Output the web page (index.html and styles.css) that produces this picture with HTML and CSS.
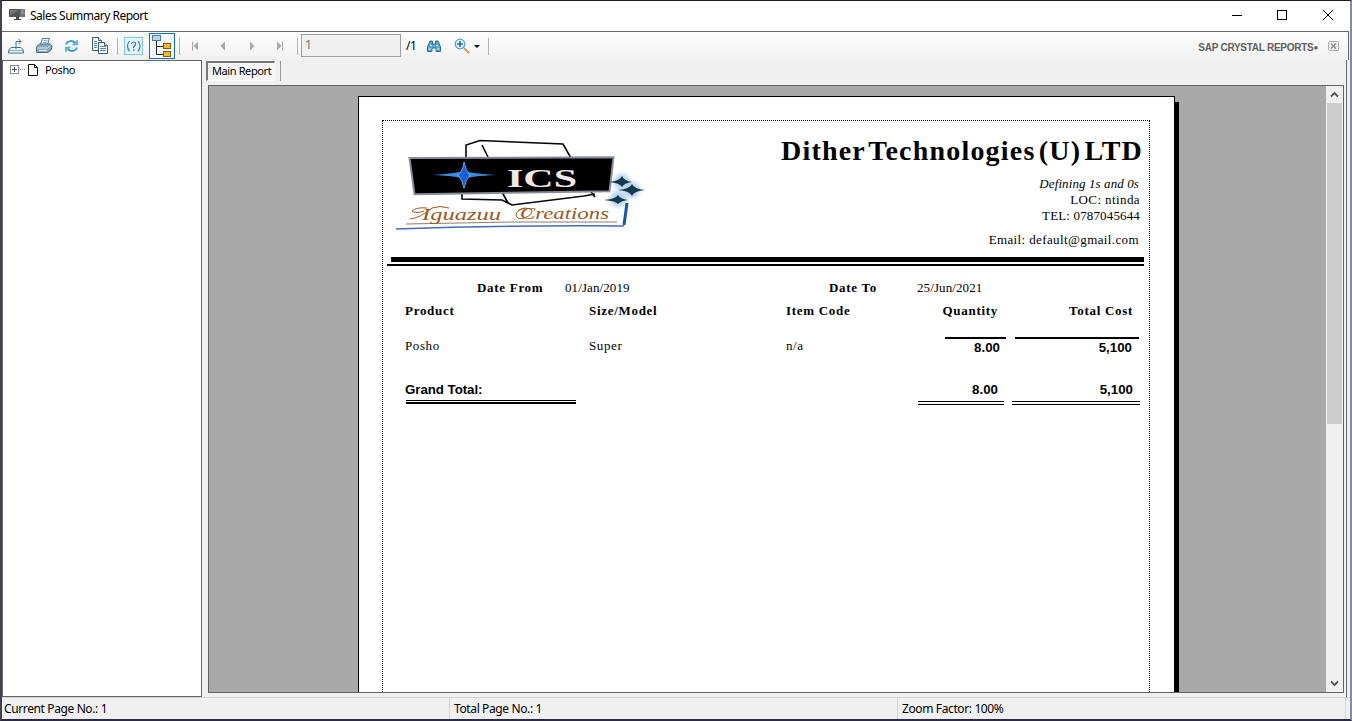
FILE: index.html
```html
<!DOCTYPE html>
<html lang="en">
<head>
<meta charset="utf-8">
<title>Sales Summary Report</title>
<link rel="stylesheet" href="styles.css">
</head>
<body>
<div class="window">
  <header class="titlebar">
    <svg class="app-icon" width="17" height="14" viewBox="0 0 17 14"><rect x="0" y="1" width="11" height="8" fill="#555"/><path d="M1 2h9L1 7z" fill="#777"/><rect x="11" y="1" width="5" height="8" fill="#777"/><path d="M12 3h3M12 5h3" stroke="#aaa"/><path d="M7 9h3v2h2v1H5v-1h2z" fill="#444"/></svg>
    <span class="caption">Sales Summary Report</span>
    <svg class="win-buttons" width="110" height="14" viewBox="0 0 110 14" fill="none" stroke="#000"><path d="M2 7.500h10"/><rect x="47.500" y="2.500" width="9" height="9"/><path d="M93 2l10 10M103 2L93 12"/></svg>
  </header>
  <nav class="toolbar">
    <svg width="300" height="28" viewBox="0 0 300 28" fill="none">
      <g stroke="#397598"><path d="M11 15.500L8.500 18.500v2.500h15v-2.500l-2.500-3z" fill="#eef7fb"/><path d="M9 18.500h14" stroke="#7fb3cf"/><path d="M16 17V9.500h5M18.500 7l2.500 2.500-2.500 2.500"/></g>
      <g stroke="#48748f"><path d="M40.500 12.500l2-6h7l-2 6" fill="#f4fafd"/><path d="M36.500 14.500l3-2.500h11l1.500 2-1 4-3 2.500h-11.500z" fill="#8aa6b8"/><path d="M37.500 16h10l3-2.500M39 18.500h8" stroke="#e4eef3"/><path d="M43.500 8.500h4M43 10.500h4" stroke="#7bb9d9"/></g>
      <g stroke="#3f9fca" stroke-width="2"><path d="M66 12.500c1.500-4 6.500-4.500 9-1.500M77 15.500c-1.500 4-6.500 4.500-9 1.500"/><path d="M77.500 8v5h-5zM65.500 20v-5h5z" fill="#62b9df" stroke-width=".6"/></g>
      <g stroke="#365b78" fill="#fff"><path d="M92.500 5.500h6l3 3v10h-9z"/><path d="M98.500 10.500h6l3 3v8h-9z"/><path d="M94 9.500h3M94 11.500h3M94 13.500h3M94 15.500h3M100 14.500h6M100 16.500h6M100 18.500h6" stroke="#5484a2"/><path d="M98.500 5.500v3h3M104.500 10.500v3h3"/></g>
      <path d="M117.500 6v17M179.500 6v17" stroke="#b5b5b5"/>
      <rect x="124.500" y="5.500" width="18" height="17" fill="#e5f4fc" stroke="#81c7eb"/>
      <path d="M129.500 9q-4 5 0 10.500M138 9q4 5 0 10.500M131.500 12q.3-2 2.200-2 2 0 2 2 0 1-2 2.500v1.500" stroke="#2880b9" stroke-width="1.200"/><path d="M133 17.200h1.500v1.500H133z" fill="#2880b9"/>
      <rect x="149.500" y="1.500" width="25" height="25" fill="#f3f9fd" stroke="#176eb5"/>
      <path d="M156.500 9v13.500h7M157 14.500h7" stroke="#222"/><rect x="152.500" y="3.500" width="8" height="5" fill="#b8d9f5" stroke="#4778a8"/><rect x="163.500" y="11.500" width="7" height="5" fill="#f6b72f" stroke="#805a18"/><rect x="163.500" y="19.500" width="7" height="5" fill="#f6b72f" stroke="#805a18"/>
      <g fill="#a9a9a9"><path d="M192 9.500h1v9h-1zM198 9.500v9L193.500 14zM225 9.500v9L220.500 14zM250 9.500v9l4.500-4.500zM277 9.500v9l4.500-4.500zM282 9.500h1v9h-1z"/></g>
      <path d="M297.500 6v17" stroke="#b5b5b5"/>
    </svg>
    <div class="page-input">1</div>
    <span class="page-total">/1</span>
    <svg class="tools" width="72" height="28" viewBox="0 0 72 28" fill="none">
      <path d="M4.500 19.500V15l2.500-6h2.500v3h3V9H15l2.500 6v4.500h-4.500V16H9v3.500z" fill="#5aa9cc" stroke="#286e95"/><path d="M7 13.500h2M13 13.500h2M5.500 17h3M13.500 17h3" stroke="#c5eafa"/>
      <path d="M41 16l5 5" stroke="#d69a59" stroke-width="2"/><circle cx="37" cy="12" r="4.800" fill="#e4f3fc" stroke="#5d9fd4" stroke-width="1.300"/><path d="M34 12h6M37 9v6" stroke="#176dc1" stroke-width="1.600"/>
      <path d="M51 13h6l-3 3z" fill="#000"/><path d="M65.500 6v17" stroke="#b5b5b5"/>
    </svg>
    <span class="brand">SAP CRYSTAL REPORTS<sup>●</sup></span>
    <svg class="close-view" width="12" height="12" viewBox="0 0 12 12"><rect x=".5" y=".5" width="10" height="9" rx="1" fill="#eee" stroke="#b0b0b0"/><path d="M3 2.500l5 5M8 2.500l-5 5" stroke="#888" stroke-width="1.200"/></svg>
  </nav>
  <main class="workspace">
    <aside class="tree">
      <svg width="32" height="16" viewBox="0 0 32 16" fill="none"><rect x="1.500" y="3.500" width="8" height="8" fill="#fff" stroke="#8b8b8b"/><path d="M3 7.500h5M5.500 5v5" stroke="#36507e"/><path d="M11 7.500h5" stroke="#888" stroke-dasharray="1 1"/><path d="M19.500 2.500h6l3 3v8h-9zM25.500 2.500v3h3" stroke="#111"/></svg>
      <span>Posho</span>
    </aside>
    <section class="viewer">
      <div class="tabs"><div class="tab">Main Report</div><i class="tab-sep"></i></div>
      <div class="canvas">
        <div class="stage">
          <article class="page">
            <div class="frame">
              <div class="letterhead">
                <svg class="logo" width="262" height="112" viewBox="384 130 262 112" fill="none">
                  <g stroke="#050505" stroke-width="1.600"><path d="M466 158v-13l14-4.500 83 3.500 8 14M482 145l6 12M462 193v6l40 1 10 5 72-9 11-2M502 192l6 11M591 192l4 5"/></g>
                  <path d="M409.500 158l204-.7-4 34-195 3z" fill="#000" stroke="#858c98" stroke-width="2"/>
                  <path d="M433 175q25-2 31-4 5 2 32 4-25 1-32 4-7-3-31-4z" fill="#3b8be0"/><path d="M458 175q5-4 6-13 2 9 6 13-4 4-6 13-2-9-6-13z" fill="#1560d8" stroke="#86b8f0" stroke-width=".8"/>
                  <text class="logo-name" x="507" y="187" textLength="70" lengthAdjust="spacingAndGlyphs">ICS</text>
                  <g fill="#a5c6e8" class="glow"><circle cx="622" cy="182" r="8"/><circle cx="632" cy="190" r="8"/><circle cx="618" cy="199" r="8"/></g>
                  <path d="M609 182q11-1 13-6 2 5 10 6-8 1-10 5-2-4-13-5zM618 190q12-1 14-6 2 5 13 6-11 1-13 6-2-5-14-6zM604 200q12-1 14-5 2 4 10 5-8 1-10 4-2-3-14-4z" fill="#113a4d"/>
                  <path d="M627 203l-3 22" stroke="#1854a5" stroke-width="3"/><path d="M624 226q-115-1-228 3" stroke="#466caf" stroke-width="1.600"/><path d="M406 224q105-3 211-2" stroke="#8c7b70"/>
                  <path d="M410 219q10-1 22-11 8-3 17 0M424 211q-8 3-12 0 4-4 15-3M525 208q-8 1-9 7 1 5 8 3 9-3 8-8-6-4-14 1" stroke="#9b5920"/>
                  <text class="script" x="422" y="220" textLength="79" lengthAdjust="spacingAndGlyphs">Iguazuu</text><text class="script" x="520" y="219" textLength="89" lengthAdjust="spacingAndGlyphs">Creations</text>
                </svg>
                <div class="company">
                  <h1>Dither Technologies (U) LTD</h1>
                  <p class="motto">Defining 1s and 0s</p>
                  <p class="loc">LOC: ntinda</p>
                  <p class="tel">TEL: 0787045644</p>
                  <p class="email">Email: default@gmail.com</p>
                </div>
              </div>
              <div class="rule-thick"></div><div class="rule-thin"></div>
              <div class="dates"><b>Date From</b><span>01/Jan/2019</span><b>Date To</b><span>25/Jun/2021</span></div>
              <div class="row head"><b>Product</b><b>Size/Model</b><b>Item Code</b><b class="num">Quantity</b><b class="num">Total Cost</b></div>
              <div class="row item"><span>Posho</span><span>Super</span><span>n/a</span><b class="num qty">8.00</b><b class="num cost">5,100</b></div>
              <div class="row total"><b class="grand">Grand Total:</b><b class="num qty">8.00</b><b class="num cost">5,100</b></div>
            </div>
          </article>
        </div>
        <div class="scrollbar">
          <svg width="17" height="17" viewBox="0 0 17 17"><path d="M5 10.500L8.500 7l3.500 3.500" fill="none" stroke="#505050" stroke-width="1.800"/></svg>
          <div class="thumb"></div>
          <svg width="17" height="17" viewBox="0 0 17 17"><path d="M5 6.500L8.500 10 12 6.500" fill="none" stroke="#505050" stroke-width="1.800"/></svg>
        </div>
      </div>
    </section>
  </main>
  <footer class="status"><span>Current Page No.: 1</span><span>Total Page No.: 1</span><span>Zoom Factor: 100%</span></footer>
</div>
</body>
</html>
```

FILE: styles.css
```css
* { box-sizing: border-box; }
body { margin: 0; font-family: "Noto Sans", "Open Sans", sans-serif; font-size: 12px; color: #000; }
svg { display: block; flex: none; }
.window { width: 1352px; height: 721px; display: flex; flex-direction: column; overflow: hidden; background: #f0f0f0; border-top: 1px solid #201c22; border-bottom: 2px solid #2b2946; border-left: 2px solid #42414f; border-right: 2px solid #858b9a; }
.titlebar { height: 30px; flex: none; display: flex; align-items: center; background: #fff; padding: 0 0 2px 7px; }
.caption { margin-left: 4px; letter-spacing: -.5px; white-space: nowrap; }
.win-buttons { margin-left: auto; margin-right: 10px; }
.toolbar { height: 29px; flex: none; display: flex; align-items: center; border-top: 1px solid #666; border-right: 1px solid #666; margin-right: 1px; background: linear-gradient(#fefefe, #f1f1f1); }
.toolbar > svg:first-child { margin-left: -2px; }
.page-input { width: 100px; height: 23px; margin-left: 1px; margin-top: -2px; border: 1px solid #a0a0a0; background: #f0f0f0; color: #777; padding-left: 3px; line-height: 20px; }
.page-total { margin: -2px 0 0 5px; width: 15px; letter-spacing: -.5px; }
.tools { margin-left: 2px; }
.brand { margin-left: auto; font: bold 10px/14px "Liberation Sans", Arial, sans-serif; color: #606060; white-space: nowrap; padding-top: 3px; letter-spacing: -.27px; }
.brand sup { font-size: 8px; line-height: 0; vertical-align: 1px; }
.close-view { margin: 1px 8px 0 10px; }
.workspace { height: 637px; flex: none; display: flex; }
.tree { width: 200px; height: 637px; background: #fff; border: 1px solid #646464; display: flex; padding: 1px 0 0 6px; font-size: 11px; line-height: 15px; }
.tree span { margin-left: 4px; letter-spacing: -.4px; }
.viewer { width: 1145px; border-right: 1px solid #666; padding-left: 4px; }
.tabs { height: 25px; display: flex; }
.tab { width: 69px; height: 20px; margin-top: 1px; border: 1px solid #fff; border-top: 2px solid #777; border-left: 2px solid #777; background: #f6f6f6; font-size: 11px; line-height: 16px; padding-left: 4px; letter-spacing: -.4px; white-space: nowrap; }
.tab-sep { width: 1px; height: 20px; background: #999; margin: 1px 0 0 5px; }
.canvas { width: 1136px; height: 608px; margin-left: 2px; border: 1px solid #646464; display: flex; background: #a9a9a9; overflow: hidden; }
.stage { width: 1117px; height: 606px; padding: 10px 0 0 149px; overflow: hidden; }
.page { width: 817px; height: 900px; background: #fff; border: 1px solid #000; box-shadow: 4px 6px 0 #000; padding: 23px 0 0 23px; }
.frame { width: 768px; height: 860px; border: 1px dotted #000; font-family: "Liberation Serif", "Times New Roman", serif; font-size: 13px; }
.letterhead { height: 136px; display: flex; justify-content: space-between; padding: 9px 7px 0 1px; }
.company { text-align: right; white-space: nowrap; }
.company h1 { font-size: 28px; line-height: 42px; margin: 0; letter-spacing: 1.2px; word-spacing: -5px; margin-right: -1px; }
.company p { margin: 0; height: 16px; line-height: 16px; }
.company .motto { font-style: italic; margin-top: 4px; padding-right: 3px; letter-spacing: .1px; }
.company .loc, .company .tel { padding-right: 2px; letter-spacing: .15px; }
.company .loc { letter-spacing: .4px; }
.company .email { margin-top: 8px; padding-right: 3px; letter-spacing: .38px; }
.rule-thick { height: 5px; margin: 0 5px 0 8px; background: #000; box-shadow: -1px -1px 0 -1px #000; }
.rule-thin { height: 2px; margin: 2px 5px 0 4px; background: #000; }
.dates { display: grid; grid-template-columns: 88px 264px 88px 100px; padding-left: 94px; margin-top: 14px; line-height: 16px; height: 23px; }
.dates b, .head b { letter-spacing: .7px; }
.dates span { letter-spacing: .1px; }
.row { display: grid; grid-template-columns: 184px 197px 132px 94px 128px; padding-left: 22px; line-height: 16px; }
.row .num { text-align: right; }
.head { height: 34px; }
.head .num { padding-right: 7px; }
.head .num:nth-child(4) { padding-right: 14px; }
.item span { padding-top: 1px; letter-spacing: .6px; }
.item { height: 43px; }
.item .num { border-top: 2px solid #000; font: bold 13.3px/17px "Liberation Sans", Arial, sans-serif; height: 25px; }
.item .qty { margin: 0 6px 0 27px; padding-right: 6px; }
.item .cost { margin: 0 1px 0 3px; padding-right: 7px; }
.row.total { grid-template-columns: 171px 342px 94px 128px; margin-top: 1px; height: 30px; }
.total b { font: bold 13.3px/18px "Liberation Sans", Arial, sans-serif; height: 24px; }
.total .grand { height: 23px; border-bottom: 2px solid #000; box-shadow: inset 0 -1px #fff, inset 0 -2px #000; margin-left: 1px; text-indent: -1px; letter-spacing: -.05px; }
.total .qty { grid-column: 3; margin-right: 8px; padding-right: 6px; border-bottom: 4px double #000; }
.total .cost { padding-right: 7px; border-bottom: 4px double #000; }
.logo-name { font: bold 25px "Liberation Serif", serif; fill: #eee9e5; }
.script { font: italic 16px "Liberation Serif", serif; fill: #9b5920; }
.glow { filter: blur(2px); opacity: .8; }
.scrollbar { width: 17px; display: flex; flex-direction: column; background: #f0f0f0; }
.thumb { width: 15px; height: 321px; margin: 0 0 auto 1px; background: #cdcdcd; }
.status { height: 22px; flex: none; display: flex; border-top: 1px solid #d5d5d5; line-height: 22px; letter-spacing: -.38px; }
.status span { padding-left: 2px; width: 448px; white-space: nowrap; border-right: 1px solid #d5d5d5; }
.status span + span { padding-left: 4px; }
```
